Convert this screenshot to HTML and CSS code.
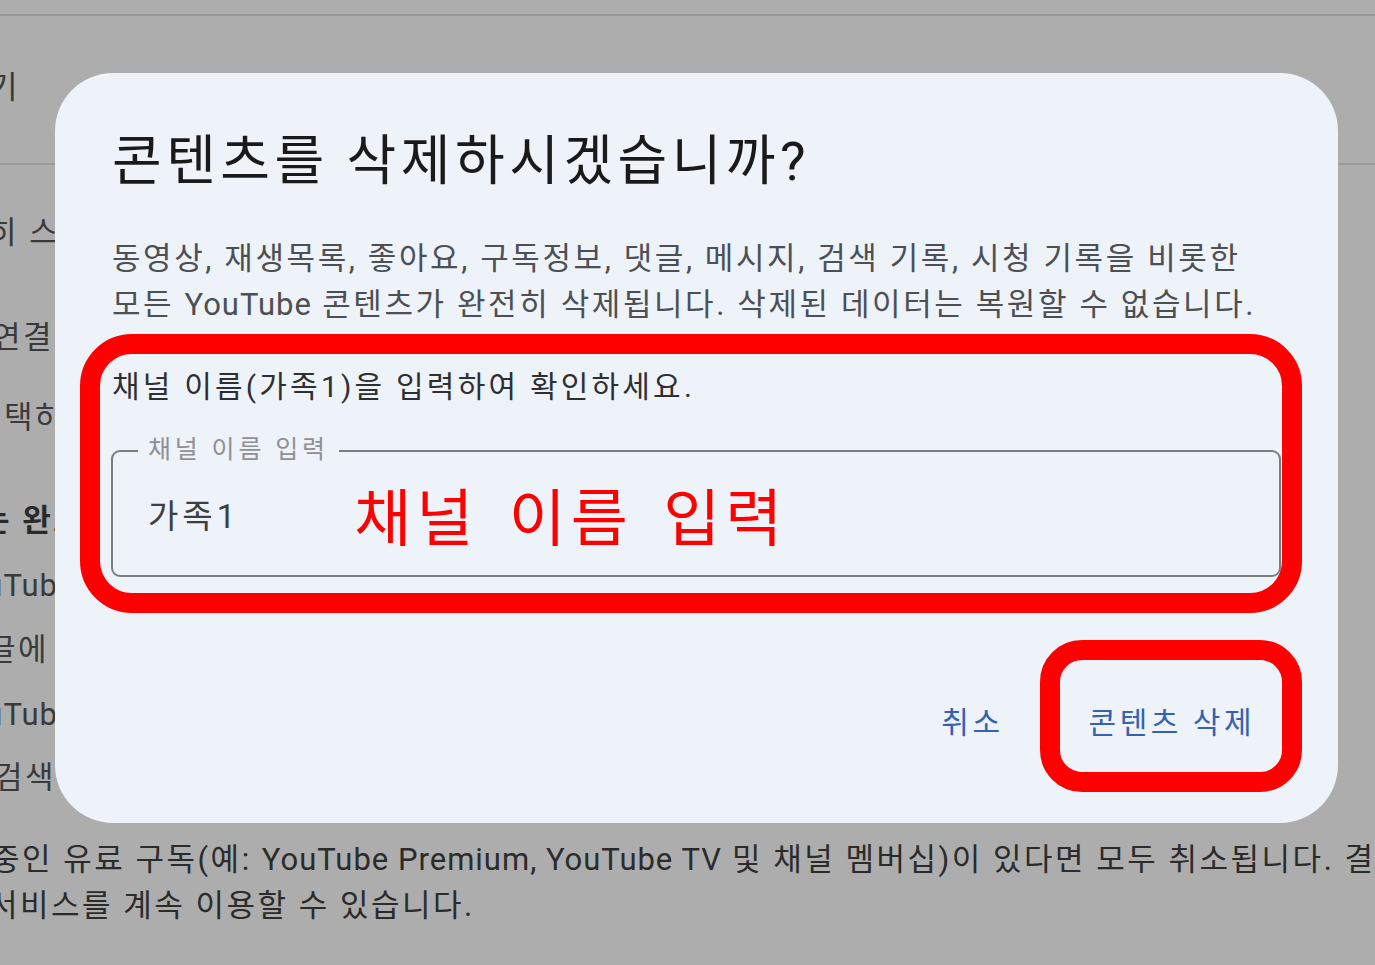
FILE: index.html
```html
<!DOCTYPE html>
<html lang="ko">
<head>
<meta charset="utf-8">
<title>콘텐츠 삭제</title>
<link rel="stylesheet" href="styles.css">
</head>
<body>
<div class="page">
  <div class="topbar"></div>
  <div class="bg-line l1"><span class="shift s1">기</span></div>
  <div class="divider"></div>
  <div class="bg-line l2"><span class="shift s2">히 스</span></div>
  <div class="bg-line l3"><span class="shift s3">연결</span></div>
  <div class="bg-line l4"><span class="shift s4">택하</span></div>
  <div class="bg-line l5 bold"><span class="shift s5">는 완료</span></div>
  <div class="bg-line l6"><span class="shift s6 latin">YouTube</span></div>
  <div class="bg-line l7"><span class="shift s7">글에</span></div>
  <div class="bg-line l8"><span class="shift s6 latin">YouTube</span></div>
  <div class="bg-line l9"><span class="shift s9">검색</span></div>
  <div class="bg-para">
    <div class="p1"><span class="shift s10">중인 유료 구독(예: <span class="latin">YouTube Premium, YouTube TV</span> 및 채널 멤버십)이 있다면 모두 취소됩니다. 결제</span></div>
    <div class="p2"><span class="shift s11">서비스를 계속 이용할 수 있습니다.</span></div>
  </div>
</div>

<div class="dialog">
  <h1 class="title">콘텐츠를 삭제하시겠습니까?</h1>
  <p class="desc">동영상, 재생목록, 좋아요, 구독정보, 댓글, 메시지, 검색 기록, 시청 기록을 비롯한<br>모든 <span class="latin">YouTube</span> 콘텐츠가 완전히 삭제됩니다. 삭제된 데이터는 복원할 수 없습니다.</p>
  <p class="prompt">채널 이름(가족1)을 입력하여 확인하세요.</p>
  <div class="field">
    <span class="field-label">채널 이름 입력</span>
    <span class="field-value">가족1</span>
    <span class="annot-text">채널 이름 입력</span>
  </div>
  <div class="actions">
    <button class="btn">취소</button>
    <button class="btn">콘텐츠 삭제</button>
  </div>
</div>

<div class="mark mark-field"></div>
<div class="mark mark-btn"></div>
</body>
</html>
```

FILE: styles.css
```css
html, body {
  margin: 0;
  padding: 0;
}
body {
  width: 1375px;
  height: 965px;
  overflow: hidden;
  background: #adadad;
  font-family: Roboto, "Noto Sans CJK KR", sans-serif;
  position: relative;
}
.page {
  width: 1375px;
  height: 965px;
  overflow: hidden;
  color: #2a2a2a;
  font-size: 31px;
  letter-spacing: 2.5px;
}
.latin { letter-spacing: 1px; }
.topbar {
  height: 14px;
  border-bottom: 2px solid #979797;
}
.divider {
  margin-top: 52px;
  height: 2px;
  background: #9b9b9b;
}
.bg-line {
  height: 46px;
  line-height: 46px;
  white-space: nowrap;
  color: #3a3a3a;
}
.bold { font-weight: 700; color: #2a2a2a; }
.shift { display: inline-block; }
.l1 { margin-top: 49px; }
.l2 { margin-top: 45px; }
.l3 { margin-top: 59px; }
.l4 { margin-top: 34px; }
.l5 { margin-top: 57px; }
.l6 { margin-top: 19px; }
.l7 { margin-top: 18px; }
.l8 { margin-top: 19px; }
.l9 { margin-top: 17px; }
.s1 { margin-left: -11px; }
.s2 { margin-left: -12px; }
.s3 { margin-left: -8px; }
.s4 { margin-left: 4px; }
.s5 { margin-left: -19px; }
.s6 { margin-left: -52px; }
.s7 { margin-left: -13px; }
.s9 { margin-left: -6px; }
.s10 { margin-left: -9px; }
.s11 { margin-left: -11px; }
.bg-para {
  margin-top: 36px;
  white-space: nowrap;
  line-height: 46px;
  color: #2b2b2b;
}

.dialog {
  position: absolute;
  left: 55px;
  top: 73px;
  width: 1283px;
  height: 750px;
  box-sizing: border-box;
  padding: 58px 57px 0 57px;
  background: #eef2f9;
  border-radius: 58px;
}
.title {
  margin: 0;
  font-size: 54px;
  font-weight: 400;
  line-height: 62px;
  letter-spacing: 4.5px;
  color: #1a1a1a;
}
.desc {
  margin: 43px 0 0 0;
  font-size: 31px;
  line-height: 46px;
  letter-spacing: 2.6px;
  color: #4c4f53;
}
.prompt {
  margin: 36px 0 0 0;
  font-size: 30px;
  line-height: 46px;
  letter-spacing: 3.2px;
  color: #2e2f31;
}
.field {
  position: relative;
  margin: 40px 0 0 -1px;
  height: 127px;
  box-sizing: border-box;
  border: 2px solid #7b7d80;
  border-radius: 9px;
  display: flex;
  align-items: center;
  padding-left: 35px;
}
.field-label {
  position: absolute;
  left: 25px;
  top: -20px;
  padding: 0 10px;
  background: #eef2f9;
  font-size: 25px;
  line-height: 36px;
  letter-spacing: 3.8px;
  color: #8e9094;
}
.field-value {
  font-size: 33px;
  letter-spacing: 4px;
  color: #3d3f42;
}
.annot-text {
  margin-left: 115px;
  font-size: 62px;
  letter-spacing: 5px;
  word-spacing: 10px;
  color: #ff0000;
}
.actions {
  margin-top: 113px;
  display: flex;
  justify-content: flex-end;
  gap: 30px;
}
.btn {
  border: 0;
  background: transparent;
  padding: 0 26px 0 29px;
  height: 60px;
  font-family: Roboto, "Noto Sans CJK KR", sans-serif;
  font-size: 30px;
  letter-spacing: 3.5px;
  color: #3461b0;
}

.mark {
  position: absolute;
  box-sizing: border-box;
  border: 20px solid #ff0000;
}
.mark-field {
  left: 80px;
  top: 334px;
  width: 1222px;
  height: 279px;
  border-radius: 52px;
}
.mark-btn {
  left: 1040px;
  top: 640px;
  width: 262px;
  height: 152px;
  border-radius: 42px;
}
```
